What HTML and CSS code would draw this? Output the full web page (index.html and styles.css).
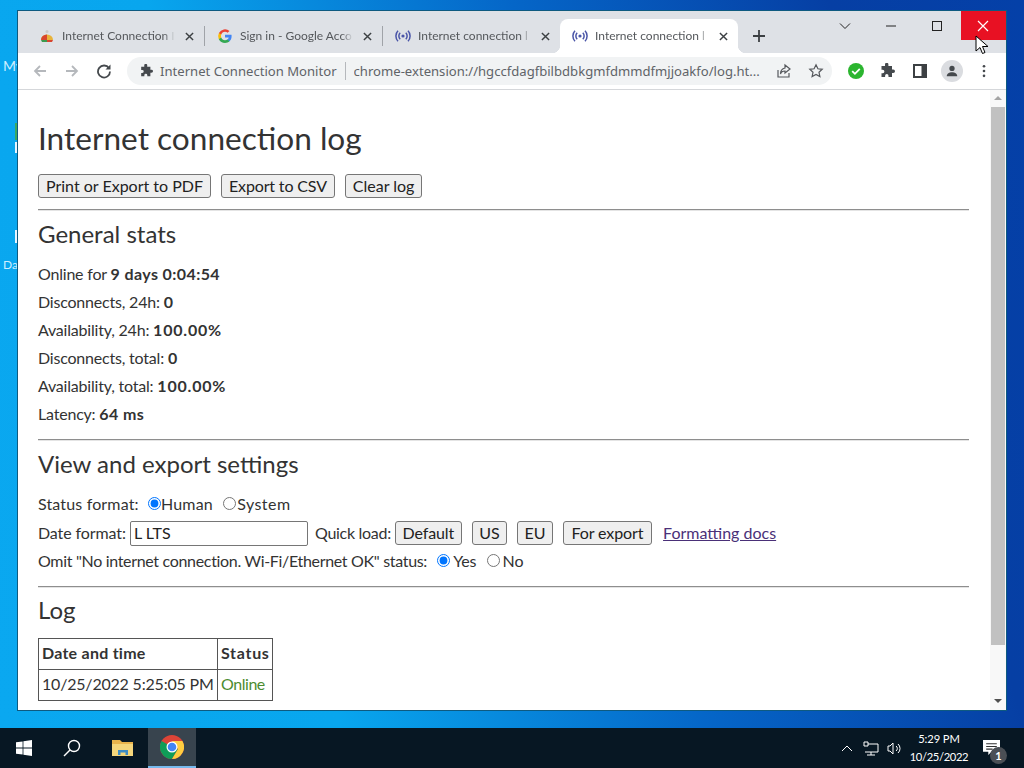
FILE: index.html
```html
<!DOCTYPE html>
<html lang="en">
<head>
<meta charset="utf-8">
<title>Internet connection log</title>
<link rel="stylesheet" href="styles.css">
</head>
<body>
<div class="desktop">
  <span class="desk-label desk-my">My</span>
  <span class="desk-label desk-da">Da</span>
  <span class="desk-sliver s0"></span>
  <span class="desk-sliver s1"></span>
  <span class="desk-sliver s2"></span>

  <div class="window">
    <div class="tabstrip">
      <div class="tab">
        <svg class="fav" viewBox="0 0 16 16"><path d="M2 12a6 5.500 0 0 1 12 0z" fill="#e8b33a"/><path d="M2 12a6 5.500 0 0 1 6-5.500V12z" fill="#d8452e"/><path d="M2 12h6v2H3z" fill="#3c9a4e"/><path d="M8 12h6l-1 2H8z" fill="#d8452e"/><circle cx="8" cy="3.500" r="1.500" fill="#c9c9c9"/></svg>
        <span class="tab-title">Internet Connection I</span>
        <svg class="x" viewBox="0 0 10 10"><path d="M1 1l8 8M9 1l-8 8"/></svg>
      </div>
      <i class="tabsep"></i>
      <div class="tab">
        <svg class="fav" viewBox="0 0 16 16"><path d="M14.600 8.200c0-.5 0-1-.1-1.400H8v2.700h3.700a3.200 3.200 0 0 1-1.400 2.100v1.700h2.200c1.300-1.200 2.100-3 2.100-5.100z" fill="#4285f4"/><path d="M8 15c1.900 0 3.400-.6 4.500-1.700l-2.200-1.700c-.6.4-1.400.7-2.300.7-1.800 0-3.300-1.200-3.800-2.800H1.900v1.700A7 7 0 0 0 8 15z" fill="#34a853"/><path d="M4.200 9.500a4.200 4.200 0 0 1 0-2.900V4.900H1.900a7 7 0 0 0 0 6.300z" fill="#fbbc05"/><path d="M8 3.800c1 0 1.900.4 2.600 1l1.900-1.900A7 7 0 0 0 1.900 4.900l2.300 1.700C4.700 5 6.200 3.800 8 3.800z" fill="#ea4335"/></svg>
        <span class="tab-title">Sign in - Google Acco</span>
        <svg class="x" viewBox="0 0 10 10"><path d="M1 1l8 8M9 1l-8 8"/></svg>
      </div>
      <i class="tabsep"></i>
      <div class="tab">
        <svg class="fav radio" viewBox="0 0 16 16"><use href="#radio-icon"/></svg>
        <span class="tab-title">Internet connection l</span>
        <svg class="x" viewBox="0 0 10 10"><path d="M1 1l8 8M9 1l-8 8"/></svg>
      </div>
      <div class="tab active">
        <svg class="fav radio" viewBox="0 0 16 16"><use href="#radio-icon"/></svg>
        <span class="tab-title">Internet connection l</span>
        <svg class="x" viewBox="0 0 10 10"><path d="M1 1l8 8M9 1l-8 8"/></svg>
      </div>
      <svg class="newtab" viewBox="0 0 12 12"><path d="M6 0v12M0 6h12"/></svg>
      <div class="winctl">
        <svg class="ctl chev" viewBox="0 0 12 12"><path d="M1 3.500l5 5 5-5"/></svg>
        <svg class="ctl min" viewBox="0 0 12 12"><path d="M1 6h10"/></svg>
        <svg class="ctl max" viewBox="0 0 12 12"><rect x="1.500" y="1.500" width="9" height="9"/></svg>
        <div class="close"><svg class="ctl" viewBox="0 0 12 12"><path d="M1 1l10 10M11 1L1 11"/></svg></div>
      </div>
    </div>

    <div class="toolbar">
      <svg class="nav dim" viewBox="0 0 16 16"><path d="M14 8H3M8 3L3 8l5 5"/></svg>
      <svg class="nav dim" viewBox="0 0 16 16"><path d="M2 8h11M8 3l5 5-5 5"/></svg>
      <svg class="nav reload" viewBox="0 0 16 16"><path d="M13 5.200A6 6 0 1 0 14 8.500"/><path class="solid" d="M14.500 1.500v5h-5z"/></svg>
      <div class="omnibox">
        <svg class="puzzle small" viewBox="0 0 16 16"><use href="#puzzle-icon"/></svg>
        <span class="ext-name">Internet Connection Monitor</span>
        <i class="omni-sep"></i>
        <span class="url">chrome-extension://hgccfdagfbilbdbkgmfdmmdfmjjoakfo/log.ht...</span>
        <svg class="omni-ic share" viewBox="0 0 16 16"><path d="M2 7v7h11v-4M9 2l5 4-5 4V8C7 8 5 9 4.500 11c0-4 2-5.500 4.500-6z"/></svg>
        <svg class="omni-ic" viewBox="0 0 16 16"><path d="M8 1.800l1.900 4 4.300.5-3.200 3 .9 4.300L8 11.500l-3.900 2.100.9-4.300-3.200-3 4.300-.5z"/></svg>
      </div>
      <svg class="ext-check" viewBox="0 0 16 16"><circle cx="8" cy="8" r="8" fill="#2bb52f"/><path d="M4.200 8.200l2.700 2.600 4.900-5" fill="none" stroke="#fff" stroke-width="1.800"/></svg>
      <svg class="puzzle" viewBox="0 0 16 16"><use href="#puzzle-icon"/></svg>
      <svg class="sidepanel" viewBox="0 0 14 14"><path d="M0 0h14v14H0z" fill="#3c4043"/><path d="M2 2h6.500v10H2z" fill="#fff"/></svg>
      <div class="avatar"><svg viewBox="0 0 16 16"><circle cx="8" cy="5" r="3"/><path d="M2 14c0-3 3-4.500 6-4.500s6 1.500 6 4.500z"/></svg></div>
      <svg class="kebab" viewBox="0 0 4 16"><circle cx="2" cy="2.500" r="1.500"/><circle cx="2" cy="8" r="1.500"/><circle cx="2" cy="13.500" r="1.500"/></svg>
    </div>

    <div class="viewport">
      <main class="page">
        <h1>Internet connection log</h1>
        <div class="actions">
          <button>Print or Export to PDF</button>
          <button class="csv">Export to CSV</button>
          <button>Clear log</button>
        </div>
        <hr>
        <h2>General stats</h2>
        <p>Online for <b>9 days 0:04:54</b></p>
        <p>Disconnects, 24h: <b>0</b></p>
        <p>Availability, 24h: <b class="pct">100.00%</b></p>
        <p>Disconnects, total: <b>0</b></p>
        <p>Availability, total: <b class="pct">100.00%</b></p>
        <p>Latency: <b>64 ms</b></p>
        <hr>
        <h2>View and export settings</h2>
        <div class="setting status-row">Status format:
          <label class="opt"><input type="radio" name="fmt" checked>Human</label>
          <label class="opt system"><input type="radio" name="fmt">System</label>
        </div>
        <div class="setting date-row"><span class="date-label">Date format:</span> <input class="date" type="text" value="L LTS">
          <span class="quick">Quick load:</span>
          <button class="tight">Default</button>
          <button>US</button>
          <button>EU</button>
          <button class="wide">For export</button>
          <a href="#">Formatting docs</a>
        </div>
        <div class="setting omit-row"><span class="omit-text">Omit "No internet connection. Wi-Fi/Ethernet OK" status:</span>
          <label class="opt"><input type="radio" name="omit" checked>Yes</label>
          <label class="opt"><input type="radio" name="omit">No</label>
        </div>
        <hr class="last">
        <h2>Log</h2>
        <table>
          <tr><th class="col-date">Date and time</th><th class="col-status">Status</th></tr>
          <tr><td>10/25/2022 5:25:05 PM</td><td class="online">Online</td></tr>
        </table>
      </main>
      <div class="scrollbar">
        <span class="arrow up"></span>
        <div class="track"><div class="thumb"></div></div>
        <span class="arrow down"></span>
      </div>
    </div>
  </div>

  <svg class="cursor" viewBox="0 0 14 20"><path d="M1 1v15l4-3.500 2.500 6 2.500-1-2.500-6H13z" fill="#fff" stroke="#000" stroke-width="1"/></svg>
</div>

<footer class="taskbar">
  <svg class="tb-start" viewBox="0 0 16 16"><path d="M0 2.300l6.600-.9v6.200H0zM7.400 1.300L16 0v7.600H7.400zM0 8.400h6.600v6.200L0 13.700zM7.400 8.400H16V16l-8.600-1.300z"/></svg>
  <svg class="tb-search" viewBox="0 0 18 18"><circle cx="11" cy="7" r="5.500"/><path d="M7 11l-6 6"/></svg>
  <svg class="tb-folder" viewBox="0 0 22 18"><path d="M0 1h8l2 2h11v14H0z" fill="#e9b44c"/><path d="M0 5h21v12H0z" fill="#f5d67b"/><path d="M6 16v-5h10v5h-2.500v-2.500h-5V16z" fill="#3d8bc4"/></svg>
  <div class="tb-chrome">
    <svg viewBox="0 0 24 24"><circle cx="12" cy="12" r="12" fill="#db4437"/><path d="M12 12L1.600 6A12 12 0 0 0 12 24l6-10z" fill="#0f9d58"/><path d="M12 6h10.400A12 12 0 0 1 12 24l6-10z" fill="#ffcd40"/><circle cx="12" cy="12" r="5.500" fill="#fff"/><circle cx="12" cy="12" r="4.300" fill="#4285f4"/></svg>
  </div>
  <div class="tray">
    <svg class="tray-chev" viewBox="0 0 12 8"><path d="M1 7l5-5 5 5"/></svg>
    <svg class="tray-net" viewBox="0 0 16 15"><path d="M5 3h10v8H2M8 11v3M4 14h8M1 1h4v4H1z"/></svg>
    <svg class="tray-vol" viewBox="0 0 16 15"><path d="M1 5h2l3-3v11l-3-3H1zM9 5a3 3 0 0 1 0 5M11 3a6 6 0 0 1 0 9"/></svg>
    <div class="clock"><span>5:29 PM</span><span class="clock-date">10/25/2022</span></div>
    <div class="notif">
      <svg viewBox="0 0 16 14"><path d="M0 0h16v11H8l-3 3v-3H0z" fill="#fff"/><path d="M3 3.500h10M3 6h10M3 8.500h6" stroke="#333" fill="none"/></svg>
      <span class="badge">1</span>
    </div>
  </div>
</footer>

<svg class="defs" width="0" height="0">
  <defs>
    <g id="radio-icon">
      <circle cx="8" cy="8" r="1.600" fill="#4a55a8"/>
      <path d="M5.200 4.800a4.500 4.500 0 0 0 0 6.400M10.800 4.800a4.500 4.500 0 0 1 0 6.400M3 2.800a7.500 7.500 0 0 0 0 10.400M13 2.800a7.500 7.500 0 0 1 0 10.400" fill="none" stroke="#4a55a8" stroke-width="1.500"/>
    </g>
    <path id="puzzle-icon" d="M6 1.500a1.700 1.700 0 0 1 3.400 0V3H13v3.600h1.300a1.700 1.700 0 0 1 0 3.400H13v4H9.500v-1.200a1.700 1.700 0 0 0-3.400 0V14H2.500v-3.800h1.200a1.700 1.700 0 0 0 0-3.400H2.500V3H6z"/>
  </defs>
</svg>
</body>
</html>
```

FILE: styles.css
```css
* { box-sizing: border-box; }
html, body { margin: 0; padding: 0; height: 100%; overflow: hidden; }
body {
  width: 1024px;
  height: 768px;
  display: flex;
  flex-direction: column;
  font-family: "Lato", sans-serif;
  color: #333;
}
.defs { position: absolute; }

/* desktop */
.desktop {
  position: relative;
  flex: 1;
  background: linear-gradient(75deg, #0aa8f0 0%, #08a6ee 28%, #0788dc 42%, #0566c8 58%, #063fa4 84%, #0440a8 100%);
}
.desk-label { position: absolute; left: 3px; font-size: 12px; color: #cfeeff; }
.desk-my { top: 57px; font-size: 14px; }
.desk-da { top: 257px; }
.desk-sliver { position: absolute; left: 15px; width: 3px; background: #e8f5ff; }
.s0 { top: 123px; height: 17px; background: #3aa860; }
.s1 { top: 142px; height: 11px; }
.s2 { top: 230px; height: 13px; }

.window {
  position: absolute;
  left: 17px;
  top: 10px;
  width: 990px;
  height: 701px;
  border: 1px solid #0e5a80;
  background: #fff;
  display: flex;
  flex-direction: column;
}

/* tabs */
.tabstrip {
  height: 42px;
  background: #dee1e6;
  display: flex;
  align-items: flex-end;
  padding-left: 9px;
  position: relative;
  flex: none;
}
.tab {
  width: 177px;
  height: 34px;
  display: flex;
  align-items: center;
  padding: 0 10px 0 12px;
  font-size: 12px;
  color: #55585c;
  white-space: nowrap;
}
.tab.active {
  width: 178px;
  background: #fff;
  border-radius: 8px 8px 0 0;
  position: relative;
}
.tab.active::before, .tab.active::after {
  content: "";
  position: absolute;
  bottom: 0;
  width: 8px;
  height: 8px;
}
.tab.active::before { left: -8px; background: radial-gradient(circle at 0 0, transparent 8px, #fff 8.500px); }
.tab.active::after { right: -8px; background: radial-gradient(circle at 100% 0, transparent 8px, #fff 8.500px); }
.tabsep { width: 1px; height: 20px; background: #a0a3a8; margin: 0 0 7px; flex: none; }
.fav { width: 16px; height: 16px; flex: none; margin-right: 7px; }
.tab-title {
  flex: 1;
  overflow: hidden;
  margin-bottom: 2px;
  -webkit-mask-image: linear-gradient(90deg, #000 90%, transparent 100%);
  mask-image: linear-gradient(90deg, #000 90%, transparent 100%);
}
.x { width: 9px; height: 9px; flex: none; fill: none; stroke: #3c4043; stroke-width: 1.600; margin-left: 10px; }
.newtab { width: 12px; height: 12px; margin: 0 0 11px 15px; fill: none; stroke: #3c4043; stroke-width: 1.800; flex: none; }

.winctl {
  position: absolute;
  right: 0;
  top: 0;
  height: 29px;
  display: flex;
  align-items: center;
}
.ctl { width: 12px; height: 12px; fill: none; stroke: #222; stroke-width: 1; display: block; }
.chev { margin-right: 34px; }
.min { margin-right: 34px; }
.max { margin-right: 18px; }
.close {
  width: 45px;
  height: 29px;
  padding-right: 2px;
  background: #e81123;
  display: flex;
  align-items: center;
  justify-content: center;
}
.close .ctl { stroke: #fff; stroke-width: 1.200; }

/* toolbar */
.toolbar {
  height: 37px;
  flex: none;
  background: #fff;
  border-bottom: 1px solid #d5d7da;
  display: flex;
  align-items: center;
  padding-left: 14px;
}
.nav { width: 16px; height: 16px; flex: none; fill: none; stroke-width: 1.800; margin-right: 16px; }
.nav.dim { stroke: #b5b8bc; }
.nav.reload { stroke: #45494d; margin-right: 15px; }
.nav .solid { fill: #45494d; stroke: none; }
.omnibox {
  width: 705px;
  height: 28px;
  background: #f1f3f4;
  border-radius: 14px;
  display: flex;
  align-items: center;
  padding: 0 8px 0 12px;
  font-family: "Noto Sans", sans-serif;
  font-size: 13.100px;
  color: #5f6368;
  white-space: nowrap;
  flex: none;
}
.puzzle { width: 16px; height: 16px; flex: none; fill: #45494d; }
.puzzle.small { width: 14px; height: 14px; margin-right: 7px; }
.omni-sep { width: 1px; height: 18px; background: #b5b8bc; margin: 0 8px; flex: none; }
.url { flex: 1; overflow: hidden; }
.omni-ic { width: 16px; height: 16px; flex: none; fill: none; stroke: #55585c; stroke-width: 1.200; margin-left: 16px; }
.omni-ic.share { margin-left: 13px; }
.ext-check { width: 16px; height: 16px; flex: none; margin-left: 16px; }
.toolbar > .puzzle { margin-left: 15px; }
.sidepanel { width: 14px; height: 14px; flex: none; margin-left: 18px; }
.avatar {
  width: 22px; height: 22px; border-radius: 50%;
  background: #dadce0;
  margin-left: 14px;
  display: flex; align-items: center; justify-content: center;
  flex: none;
}
.avatar svg { width: 14px; height: 14px; fill: #45494d; }
.kebab { width: 4px; height: 14px; fill: #45494d; margin-left: 19px; flex: none; }

/* page */
.viewport { flex: 1; display: flex; min-height: 0; }
.page { flex: 1; padding: 0 21px 0 20px; overflow: hidden; min-width: 0; font-size: 16px; }
h1 { font-size: 31.600px; font-weight: 400; margin: 26px 0 14px; line-height: 44px; }
h2 { font-size: 24px; font-weight: 400; margin: 0 0 10px; line-height: 32px; }
hr { border: 0; border-top: 1px solid #8e8e8e; border-bottom: 1px solid #e4e4e4; margin: 11px 0 7px; height: 2px; }
hr.last { margin-bottom: 6px; }
p { margin: 0; line-height: 28px; letter-spacing: -.2px; }
b { font-weight: 700; letter-spacing: .4px; }
b.pct { letter-spacing: .8px; }
.actions { display: flex; gap: 10px; }
.csv { letter-spacing: -.15px; }
button {
  font: inherit;
  color: #222;
  height: 24px;
  padding: 0 7px;
  background: #efefef;
  border: 1px solid #767676;
  border-radius: 3px;
  line-height: 20px;
}
.setting { line-height: 28px; white-space: nowrap; }
.status-row { margin-bottom: 1px; letter-spacing: .15px; }
.omit-text { letter-spacing: -.32px; }
.opt { margin-left: 4px; letter-spacing: -.1px; }
.opt input { margin: 0 3px 0 2px; }
.status-row .opt { margin-left: 3px; letter-spacing: .2px; }
.status-row .opt input { margin-right: 0; }
.status-row .opt.system { margin-left: 4px; letter-spacing: .45px; }
.status-row .opt.system input { margin-right: 1px; }
.date-label { letter-spacing: -.1px; }
.date {
  font: inherit;
  color: #222;
  width: 178px;
  height: 25px;
  padding: 0 2px 0 3px;
  border: 1px solid #767676;
  border-radius: 2px;
}
.quick { margin-left: 3px; letter-spacing: -.3px; }
.date-row button { margin-left: 6px; padding: 0 6.500px; letter-spacing: -.1px; }
.date-row button.tight { margin-left: 0; }
.date-row button.wide { padding: 0 7.500px; }
a { color: #4a3078; margin-left: 7px; }
table { border-collapse: collapse; margin-top: 12px; }
th, td { border: 1px solid #555; padding: 0 2px 3px 3px; height: 31px; text-align: left; font-weight: 700; }
th { letter-spacing: .25px; }
.col-date { width: 179px; }
.col-status { width: 53px; letter-spacing: .7px; }
td { font-weight: 400; letter-spacing: -.2px; }
td.online { color: #4c8c30; letter-spacing: -.45px; }

.scrollbar { width: 16px; flex: none; background: #f8f8f8; display: flex; flex-direction: column; align-items: stretch; }
.arrow { height: 17px; flex: none; position: relative; }
.arrow::after {
  content: ""; position: absolute; left: 4px; top: 6px;
  border-left: 4px solid transparent; border-right: 4px solid transparent;
}
.up::after { border-bottom: 4px solid #a3a3a3; }
.down::after { border-top: 4px solid #505050; }
.track { flex: 1; padding: 0 1px; }
.thumb { height: 538px; background: #c1c1c1; }

.cursor { position: absolute; left: 975px; top: 35px; width: 14px; height: 20px; }

/* taskbar */
.taskbar {
  height: 40px;
  flex: none;
  background: #071723;
  display: flex;
  align-items: center;
  color: #fff;
}
.tb-start { width: 16px; height: 16px; fill: #fff; margin-left: 16px; flex: none; }
.tb-search { width: 18px; height: 18px; fill: none; stroke: #fff; stroke-width: 1.400; margin-left: 31px; flex: none; }
.tb-folder { width: 22px; height: 18px; margin-left: 31px; flex: none; }
.tb-chrome {
  width: 48px; height: 40px; margin-left: 14px;
  background: #38444e;
  border-bottom: 2px solid #76b9ed;
  display: flex; align-items: center; justify-content: center;
  flex: none;
}
.tb-chrome svg { width: 24px; height: 24px; }
.tray { margin-left: auto; display: flex; align-items: center; }
.tray-chev { width: 12px; height: 8px; fill: none; stroke: #fff; margin-right: 10px; }
.tray-net { width: 16px; height: 15px; fill: none; stroke: #fff; stroke-width: 1; margin-right: 8px; }
.tray-vol { width: 16px; height: 15px; fill: none; stroke: #fff; stroke-width: 1; margin-right: 5px; }
.clock { display: flex; flex-direction: column; align-items: center; width: 62px; font-size: 11.200px; letter-spacing: -.1px; line-height: 18px; }
.clock-date { letter-spacing: -.35px; }
.notif { position: relative; width: 44px; height: 40px; margin-left: 10px; }
.notif svg { position: absolute; left: 3px; top: 12px; width: 17px; height: 15px; }
.badge {
  position: absolute; left: 10px; top: 19px;
  width: 17px; height: 17px; border-radius: 50%;
  background: #4a4f55; font-size: 11px; line-height: 17px; text-align: center; font-weight: 700;
}
```
